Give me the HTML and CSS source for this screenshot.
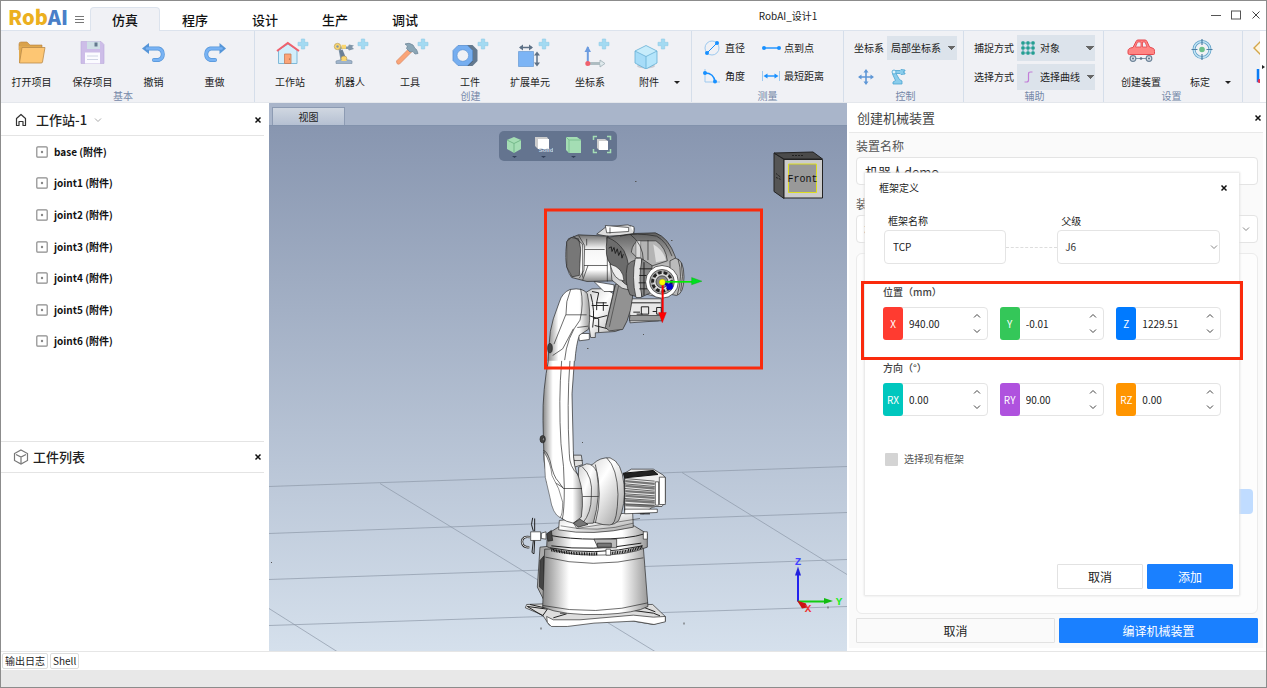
FILE: index.html
```html
<!DOCTYPE html>
<html lang="zh-CN">
<head>
  <meta charset="utf-8">
  <title>RobAI_设计1</title>
  <link rel="stylesheet" href="styles.css">
</head>
<body>
<svg class="defs" aria-hidden="true">
  <symbol id="plus" viewBox="0 0 12 12"><path d="M4.300 1h3.400v3.300H11v3.400H7.700V11H4.300V7.700H1V4.300h3.300z" fill="#a3daf2" stroke="#8fcbe6" stroke-width=".6"/></symbol>
  <symbol id="down" viewBox="0 0 8 8"><path d="M1 2.500l3 3 3-3" fill="none" stroke="currentColor"/></symbol>
  <symbol id="up" viewBox="0 0 8 8"><path d="M1 5.500l3-3 3 3" fill="none" stroke="currentColor"/></symbol>
  <symbol id="close" viewBox="0 0 8 8"><path d="M1.500 1.500l5 5m0-5l-5 5" fill="none" stroke="currentColor" stroke-width="1.500"/></symbol>
  <symbol id="node" viewBox="0 0 12 12"><rect x=".8" y=".8" width="10.400" height="10.400" rx="1" fill="#fff" stroke="#8c8c8c" stroke-width="1.200"/><circle cx="6" cy="6" r="1.200" fill="#888"/></symbol>
</svg>

<header class="titlebar">
  <div class="logo">Rob<span>AI</span></div>
  <button class="menu" type="button" aria-label="菜单"><svg width="9" height="9"><path d="M0 1.500h9M0 4.500h9M0 7.500h9" stroke="#777"/></svg></button>
  <nav class="tabs">
    <a href="#" class="active">仿真</a>
    <a href="#">程序</a>
    <a href="#">设计</a>
    <a href="#">生产</a>
    <a href="#">调试</a>
  </nav>
  <div class="title">RobAI_设计1</div>
  <div class="window-buttons">
    <button type="button" aria-label="最小化"><svg width="12" height="12"><path d="M1 6.500h10" stroke="#555"/></svg></button>
    <button type="button" aria-label="最大化"><svg width="12" height="12"><rect x="1.500" y="2" width="9" height="8" fill="none" stroke="#555"/></svg></button>
    <button type="button" aria-label="关闭"><svg width="12" height="12"><path d="M2.500 2.500l7 7m0-7l-7 7" stroke="#444"/></svg></button>
  </div>
</header>

<div class="ribbon">
  <section class="group basic">
    <div class="tools">
      <button class="tool" type="button">
        <svg width="40" height="32"><path d="M7 7q0-2 2-2h6l3 3h12v5H7z" fill="#d9a24c" stroke="#b98540" stroke-width=".6"/><path d="M7 9h22v17H7z" fill="#e0a94f"/><path d="M10 10.500h23l-2.500 14.500q0 1-1.500 1H7.500z" fill="#fdc673" stroke="#b98a4a" stroke-width=".8"/></svg>
        打开项目</button>
      <button class="tool" type="button">
        <svg width="40" height="32"><path d="M8 4.500h20l3 3v19H8z" fill="#cdbde8" stroke="#bba9da" stroke-width=".6"/><path d="M14 4.500h13v7.500H14z" fill="#cfdfe6"/><path d="M21.500 5.500h3v4h-3z" fill="#63798e"/><path d="M12 15.500h15v11H12z" fill="#fbfbff"/><path d="M14 19h11M14 22.500h11" stroke="#cfd4e5"/></svg>
        保存项目</button>
      <button class="tool" type="button">
        <svg width="40" height="32"><path d="M14 11.500h10.500a6 6 0 0 1 0 11.500H20" fill="none" stroke="#5595d8" stroke-width="4" stroke-linecap="round"/><path d="M8 11.500l7-5.500v11z" fill="#5595d8"/><path d="M13 11.500h11.500a6 6 0 0 1 0 11.500H20" fill="none" stroke="#78b3f4" stroke-width="2.600" stroke-linecap="round"/></svg>
        撤销</button>
      <button class="tool" type="button">
        <svg width="40" height="32"><path d="M26 11.500H15.500a6 6 0 0 0 0 11.500H20" fill="none" stroke="#5595d8" stroke-width="4" stroke-linecap="round"/><path d="M31 11.500L24.500 6v11z" fill="#5595d8"/><path d="M26.500 11.500H15.500a6 6 0 0 0 0 11.500H20" fill="none" stroke="#78b3f4" stroke-width="2.600" stroke-linecap="round"/></svg>
        重做</button>
    </div>
    <h2>基本</h2>
  </section>

  <section class="group create">
    <div class="tools">
      <button class="tool" type="button">
        <svg width="40" height="32"><path d="M8.500 13L18 7l9 6v13.500H8.500z" fill="#d2eefb" stroke="#7fb9d8"/><path d="M7 14L17.800 6 29 14" fill="none" stroke="#f0616d" stroke-width="2"/><path d="M14.500 17h6.500v9.500h-6.500z" fill="#fba477" stroke="#c87b57" stroke-width=".8"/><circle cx="19.500" cy="22" r=".6" fill="#8c5438"/><use href="#plus" x="27" y="1" width="12" height="12"/></svg>
        工作站</button>
      <button class="tool" type="button">
        <svg width="40" height="32"><path d="M8 9.500h10l1-2 5 1-2 1.500 2 2-5 1.500-1-1.500H11l3.500 10-4 1z" fill="#8196a9"/><circle cx="7.500" cy="9.500" r="3.200" fill="#fbd66f" stroke="#b9a060" stroke-width=".7"/><circle cx="7.500" cy="9.500" r="1.200" fill="#8196a9"/><path d="M11.500 7.800H16v4h-4.500z" fill="#fbd66f"/><path d="M9.500 14l3-1.500 3.500 8.500-4.500 1z" fill="#6a7f95"/><circle cx="14" cy="22" r="3" fill="#fbd66f" stroke="#b9a060" stroke-width=".7"/><path d="M6 26.500h16v-2.500l-3-1h-9l-4 1z" fill="#9fb4cc" stroke="#8196a9" stroke-width=".7"/><path d="M11 24l3-4 3 4z" fill="#fbd66f"/><use href="#plus" x="27" y="1" width="12" height="12"/></svg>
        机器人</button>
      <button class="tool" type="button">
        <svg width="40" height="32"><path d="M6.500 24l12-12 3 3-12 12q-1.500.5-2.500-.5z" fill="#fba477" stroke="#d98e6a" stroke-width=".8"/><path d="M15 7q4-2 8 1l2 3.500 1.500 1 1.500 4-3 .5-2-2.500-3 .5-3.500-3.500 1-2.500z" fill="#8ba6b6" stroke="#71899a" stroke-width=".8"/><use href="#plus" x="27" y="1" width="12" height="12"/></svg>
        工具</button>
      <button class="tool" type="button">
        <svg width="40" height="32"><path d="M17 8h5.500l5 5v11l-5 5H17l-4-11z" fill="#64798f"/><path d="M17.500 9l5 5v10l-5 5" fill="none" stroke="#435a72"/><path d="M8 8.500h9.500l5 5v10l-5 5H8l-5-5v-10z" fill="#76aef0" stroke="#5a90cf" stroke-width=".8"/><circle cx="12.800" cy="18.500" r="5.800" fill="#f0f1f5" stroke="#5a90cf" stroke-width=".6"/><use href="#plus" x="27" y="1" width="12" height="12"/></svg>
        工件</button>
      <button class="tool" type="button">
        <svg width="40" height="32"><path d="M8.500 14.500h15v15h-15z" fill="#7cb4f5" stroke="#5a90cf" stroke-width=".6"/><path d="M10 10.500h12M27 16v12" stroke="#5e7186" stroke-width="1.500"/><path d="M9 10.500l4-3v6zM23 10.500l-4-3v6zM27 14.500l-3 4h6zM27 29.500l-3-4h6z" fill="#5e7186"/><use href="#plus" x="28" y="1" width="12" height="12"/></svg>
        扩展单元</button>
      <button class="tool" type="button">
        <svg width="40" height="32"><path d="M17 26.500h13M30 23l5 3.500-5 3.500v-2.500H18v-2h12z" fill="#dfe9ec" stroke="#9fb0b6" stroke-width=".8"/><path d="M17.800 10v15" stroke="#6c9ce0" stroke-width="2"/><path d="M14.500 15l3.300-6 3.200 6z" fill="#6c9ce0"/><circle cx="17.800" cy="26.500" r="2.500" fill="#f0616d"/><use href="#plus" x="28" y="1" width="12" height="12"/></svg>
        坐标系</button>
      <button class="tool wide" type="button">
        <svg width="40" height="32"><ellipse cx="17" cy="29" rx="9" ry="2.500" fill="#c9cdd5"/><path d="M17 8.500l11 5.500-11 5.500L6 14z" fill="#c7ecfb"/><path d="M6 14l11 5.500V32L6 26z" fill="#a6dcf8"/><path d="M28 14l-11 5.500V32l11-6z" fill="#b5e5fb"/><path d="M17 8.500L28 14v12l-11 6-11-6V14zM6 14l11 5.500L28 14M17 19.500V32" fill="none" stroke="#65aed4" stroke-width=".8"/><use href="#plus" x="28" y="1" width="12" height="12"/></svg>
        附件</button>
      <button class="more" type="button" aria-label="更多附件"></button>
    </div>
    <h2>创建</h2>
  </section>

  <section class="group measure">
    <div class="tools">
      <button class="small" type="button"><svg width="20" height="18"><circle cx="10" cy="9" r="7" fill="none" stroke="#9dc9ef"/><path d="M5 14L15 4" stroke="#1890ff"/><circle cx="5" cy="14" r="2" fill="#1890ff"/><circle cx="15" cy="4" r="2" fill="#1890ff"/></svg>直径</button>
      <button class="small" type="button"><svg width="20" height="18"><path d="M3 9h15" stroke="#1890ff" stroke-width="1.400"/><circle cx="3" cy="9" r="2" fill="#1890ff"/><circle cx="18" cy="9" r="2" fill="#1890ff"/></svg>点到点</button>
      <button class="small" type="button"><svg width="20" height="18"><path d="M3 2v13h15" fill="none" stroke="#9dc9ef"/><path d="M3 6q9 0 10 9" fill="none" stroke="#1890ff" stroke-width="1.400"/><circle cx="3" cy="6" r="2" fill="#1890ff"/><circle cx="13" cy="14.500" r="2" fill="#1890ff"/></svg>角度</button>
      <button class="small" type="button"><svg width="20" height="18"><path d="M1.500 4v10M18.500 4v10" stroke="#9dc9ef"/><path d="M4 9h12" stroke="#1890ff" stroke-width="1.400"/><path d="M2.500 9l4-2.500v5zM17.500 9l-4-2.500v5z" fill="#1890ff"/></svg>最短距离</button>
    </div>
    <h2>测量</h2>
  </section>

  <section class="group control">
    <div class="rows">
      <div class="row">
        <label for="coord">坐标系</label>
        <select id="coord" class="drop"><option>局部坐标系</option></select>
      </div>
      <div class="row icons">
        <button type="button" aria-label="移动"><svg width="18" height="18"><path d="M9 2.500v13M2.500 9h13" stroke="#5f97d6" stroke-width="1.600"/><path d="M9 1l2.500 3.500h-5zM9 17l2.500-3.500h-5zM1 9l3.500-2.500v5zM17 9l-3.500-2.500v5z" fill="#5f97d6"/></svg></button>
        <button type="button" aria-label="机器人控制"><svg width="18" height="18"><path d="M4 2.500h7l1-1 4 .5v1l-2 1 2 1v1l-4 .5-1-1H7l3.500 6 2.500 1.500v3H4v-2l2.500-1.500L3.500 6z" fill="#8acdec" stroke="#4ba4d2" stroke-width=".8"/><circle cx="5" cy="4" r="2" fill="#dff2fb" stroke="#4ba4d2" stroke-width=".8"/></svg></button>
      </div>
    </div>
    <h2>控制</h2>
  </section>

  <section class="group assist">
    <div class="rows">
      <div class="row">
        <label for="snap">捕捉方式</label>
        <div class="drop-icon">
          <svg width="16" height="14"><path d="M3 0v14M8 0v14M13 0v14M1 2h14M1 7h14M1 12h14" stroke="#3f9fb3"/><path d="M1.500.5h3v3h-3zM6.500.5h3v3h-3zM11.500.5h3v3h-3zM1.500 5.500h3v3h-3zM6.500 5.500h3v3h-3zM11.500 5.500h3v3h-3zM1.500 10.500h3v3h-3zM6.500 10.500h3v3h-3zM11.500 10.500h3v3h-3z" fill="#25a08f"/></svg>
          <select id="snap" class="drop"><option>对象</option></select>
        </div>
      </div>
      <div class="row">
        <label for="pick">选择方式</label>
        <div class="drop-icon">
          <svg width="16" height="14"><path d="M4.500 12h2q2 0 2-2V4q0-2 2-2h2" fill="none" stroke="#c27ed8" stroke-width="1.200"/></svg>
          <select id="pick" class="drop"><option>选择曲线</option></select>
        </div>
      </div>
    </div>
    <h2>辅助</h2>
  </section>

  <section class="group setup">
    <div class="tools">
      <button class="tool" type="button">
        <svg width="40" height="32"><path d="M7 14q0-3 5-3.500L15 4.500q.5-1.500 2-1.500h7q1.500 0 2 1.500l2.500 5.500 4 1.500q1 .5 1 3v2q0 1-1 1h-24q-1.500 0-1.500-1.500z" fill="#ff8583" stroke="#e5484f"/><path d="M14.500 10l2-5H20v5zM21.500 10V5H24l2 5z" fill="#eef0f6" stroke="#e5484f" stroke-width=".8"/><path d="M12 21.500h15" stroke="#7e96ab"/><circle cx="12" cy="21.500" r="2.800" fill="#dde4ec" stroke="#6d8398" stroke-width="1.200"/><circle cx="28" cy="21.500" r="2.800" fill="#dde4ec" stroke="#6d8398" stroke-width="1.200"/><circle cx="12" cy="21.500" r="1" fill="#5e7186"/><circle cx="28" cy="21.500" r="1" fill="#5e7186"/><circle cx="20" cy="21.500" r="1.300" fill="#5e7186"/></svg>
        创建装置</button>
      <button class="tool wide" type="button">
        <svg width="40" height="32"><circle cx="22" cy="12.500" r="8" fill="none" stroke="#5d9fc6" stroke-width="3"/><circle cx="22" cy="12.500" r="8" fill="none" stroke="#c3e4f5" stroke-width="1.500"/><path d="M22 2v6M22 17v6M11.500 12.500h6M26.500 12.500h6" stroke="#4d7fa3" stroke-width="1.200"/><circle cx="22" cy="12.500" r="2.800" fill="#6cc08b"/></svg>
        标定</button>
      <button class="more" type="button" aria-label="更多标定"></button>
    </div>
    <h2>设置</h2>
  </section>

  <section class="group cut">
    <svg width="30" height="60"><path d="M17 11l-6 6 6 6 6-6z" fill="#fff6df" stroke="#d3a64a" stroke-width="1.400"/><path d="M15 38v12h12" fill="none" stroke="#0a7cf5" stroke-width="2.500"/><circle cx="16.500" cy="50" r="2" fill="#e8304c"/></svg>
  </section>
  <button class="scroll" type="button" aria-label="向右滚动"><svg width="3" height="4"><path d="M0 0l3 2-3 2z" fill="#222"/></svg></button>
</div>

<main class="workspace">
  <aside class="sidebar">
    <section class="panel stations">
      <header>
        <svg width="14" height="14" class="house"><path d="M2.500 12.500V5.500L7 1.500l4.500 4v7h-2.500V8.500H5v4z" fill="none" stroke="#333" stroke-width="1.200" stroke-linejoin="round"/></svg>
        <h3>工作站-1</h3>
        <svg width="8" height="8" class="fold"><use href="#down"/></svg>
        <button class="close" type="button" aria-label="关闭"><svg width="8" height="8"><use href="#close"/></svg></button>
      </header>
      <ul>
        <li><svg width="12" height="12"><use href="#node"/></svg>base (附件)</li>
        <li><svg width="12" height="12"><use href="#node"/></svg>joint1 (附件)</li>
        <li><svg width="12" height="12"><use href="#node"/></svg>joint2 (附件)</li>
        <li><svg width="12" height="12"><use href="#node"/></svg>joint3 (附件)</li>
        <li><svg width="12" height="12"><use href="#node"/></svg>joint4 (附件)</li>
        <li><svg width="12" height="12"><use href="#node"/></svg>joint5 (附件)</li>
        <li><svg width="12" height="12"><use href="#node"/></svg>joint6 (附件)</li>
      </ul>
    </section>
    <section class="panel parts">
      <header>
        <svg width="16" height="16"><path d="M8 1l6.500 3.500v7L8 15l-6.500-3.500v-7zM3 5.500L8 8l5-2.500M8 8v6" fill="none" stroke="#777" stroke-width="1.200"/></svg>
        <h3>工件列表</h3>
        <button class="close" type="button" aria-label="关闭"><svg width="8" height="8"><use href="#close"/></svg></button>
      </header>
    </section>
  </aside>

  <section class="view">
    <div class="view-tabs"><button type="button">视图</button></div>
    <div class="canvas">
      <svg class="scene" viewBox="269 125 578 526" preserveAspectRatio="xMidYMid slice">
        <defs>
          <linearGradient id="shell"><stop offset="0" stop-color="#888"/><stop offset=".25" stop-color="#fff"/><stop offset=".75" stop-color="#fff"/><stop offset="1" stop-color="#999"/></linearGradient>
          <linearGradient id="dome" x1="0" y1="0" x2="1" y2="1"><stop offset="0" stop-color="#ccc"/><stop offset=".4" stop-color="#fff"/><stop offset="1" stop-color="#9a9a9a"/></linearGradient>
          <linearGradient id="hood" x1="0" y1="0" x2="0" y2="1"><stop offset="0" stop-color="#606060"/><stop offset=".5" stop-color="#bbb"/><stop offset="1" stop-color="#eee"/></linearGradient>
          <linearGradient id="box" x1="0" y1="0" x2="0" y2="1"><stop offset="0" stop-color="#707070"/><stop offset=".3" stop-color="#f6f6f6"/><stop offset=".75" stop-color="#fff"/><stop offset="1" stop-color="#888"/></linearGradient>
        </defs>

        <!-- floor grid -->
        <path d="M269 486L847 466M269 533L847 512M269 579L847 559M269 625L847 606M380 483L655 651M682 472L847 574M269 608L337 651" fill="none" stroke="#8d98a8" stroke-width=".7"/>
        <path d="M635 181h1.500M587 348h1.500M643 334h1M671 240h1.500M582 442h1M541 627v2M684 622v2M828 606v2M271 562h1" stroke="#555"/>

        <!-- base, turntable and lower arm -->
        <g transform="translate(510 360) scale(.3333)" stroke="#222" stroke-width="2" stroke-linejoin="round">
          <path d="M82 680L90 560l40-4v180l-30-20z" fill="#aaa"/>
          <path d="M90 600l12-14v105l-14-12z" fill="#444"/>
          <path d="M46 742l4-10 58-2 320 2 38 36v14l-36 10-60-10-60-6-170 20-22-2-20-30z" fill="#ddd"/>
          <path d="M110 768l20 10 80 0 160-14 60 6 36-2v16l-34 8-60-10-120 6-80 10-48 0-12-12z" fill="#fff"/>
          <path d="M52 738l60 8-14 20zM150 758l180-4M370 750l60 8 20 8M130 772l40-12M60 732l44 10M400 740l36 14" fill="none" stroke-width="3"/>
          <path d="M104 566L98 740q60 26 180 22 100-4 136-24L400 560z" fill="url(#shell)"/>
          <path d="M98 735q160 34 316-8M106 590q140 36 294 2" fill="none"/>
          <path d="M112 520l40-24h220l40 24v40q-60 26-160 24-100 0-142-26z" fill="url(#shell)"/>
          <path d="M120 562q130 26 278-6M116 524q60 12 140 12 100 0 148-16M124 556q120 18 270-8" fill="none" stroke-width="3"/>
          <path d="M124 568q60 14 140 12M300 578q60-4 98-20" fill="none" stroke="#111" stroke-width="9" stroke-dasharray="3 2"/>
          <path d="M252 536h68v26h-56z" fill="#bbb"/>
          <path d="M262 548h42v12h-42z" fill="#777"/>
          <path d="M288 566h14v18h-14zM400 514h12v22h-12z" fill="#fff"/>
          <path d="M148 480l-2 28q100 20 224-8l-2-44-100 10z" fill="url(#dome)"/>
          <path d="M152 496q110 24 218-8M180 470l20 34 190-30" fill="none" stroke-width="1.500"/>
          <path d="M344 338l20-12h66l30 18 6 8v72l-10 14h-26l-30 22-56-6z" fill="#eee"/>
          <path d="M340 338l90-8 14 12-100 10zM390 460h30" stroke="#111" fill="#222" stroke-width="3"/>
          <path d="M346 362l88 8M346 376l88 8M346 392l88 6M346 406l88 6M346 420l88 6M346 434l88 4" fill="none" stroke="#777" stroke-width="7"/>
          <path d="M344 354l90 8M344 370l90 8M344 384l90 8M344 400l90 6M344 414l90 6M344 430l90 4" fill="none" stroke-width="2"/>
          <path d="M344 446h98v10l-98 4z" fill="#fff"/>
          <path d="M436 364h10v70h-10zM448 350h18v82h-18z" fill="#fff"/>
          <path d="M190 284h24l4 28-24 8zM192 300h26" fill="#ddd"/>
          <path d="M250 310q20-20 50-18 36 12 42 80 6 60-16 108-20 24-70 6l-30-6q-20-90 0-156z" fill="url(#dome)"/>
          <path d="M290 292q32 30 34 110-2 80-18 90M256 312q24 90 0 176M344 340v110" fill="none"/>
          <path d="M206 320l24-10q20 0 30 24 14 70-10 154l-50 2z" fill="url(#dome)"/>
          <path d="M216 318q34 30 28 90 0 50-26 80M218 408h48" fill="none"/>
          <path d="M117-10q-20 100-18 190l3 120q6 45 16 80l12 60q15 40 60 48l24-18q10-70-8-120-16-30-16-80l-4-170 8-110" fill="url(#shell)"/>
          <path d="M155 0q-10 120-2 250 10 70 10 130 0 70-6 96M180 0q-10 130-2 280 0 40 26 62M100 270q10 0 20 30 10 50 26 64l14 20h56M108 364h24l28 18" fill="none"/>
          <path d="M102 275q20 30 24 70 24 40 32 80 0 40-8 46-22-10-30-60l-14-60z" fill="#fff" stroke-width="1.500"/>
          <ellipse cx="98" cy="236" rx="8" ry="11" fill="#444"/>
          <ellipse cx="100" cy="236" rx="3" ry="5" fill="#999"/>
          <path d="M62 514h30v26H62zM94 518l14-4v22l-14-2z" fill="#fff"/>
          <path d="M110 520l14-10 4 30-14 2z" fill="#444"/>
          <path d="M68 472q-8 20 2 40M74 474v38M70 540l-4 36 6 4 2-40" fill="none" stroke-width="3"/>
          <path d="M60 530q-24-4-24 14 2 18 22 16" fill="none" stroke="#222" stroke-width="7"/>
          <path d="M60 530q-24-4-24 14 2 18 22 16" fill="none" stroke="#ddd" stroke-width="3"/>
          <path d="M190 488l20-12 24 16-30 8z" fill="#777"/>
        </g>

        <!-- upper arm, wrist and flange -->
        <g transform="translate(520 205) scale(.3333)" stroke="#222" stroke-width="2" stroke-linejoin="round">
          <path d="M176 392l6-8h26v18l-30 4z" fill="#fff"/>
          <path d="M196 262l20-12h40l50 30v90l-20 8-60 4v14h-14l-6-40z" fill="url(#dome)"/>
          <path d="M216 258l20 4-6 30h30M215 300h50M230 290v24M212 266q14 50 6 100M250 290v26M222 340l40-10M224 360l40 10M206 330l30 10v40" fill="none" stroke-width="3"/>
          <path d="M84 466l4-56q0-30 12-70l18-50q8-28 32-38 40-7 52 13 12 56 4 106l-28 18q-10 30-13 77" fill="url(#shell)"/>
          <path d="M152 252q-16 36-14 74l-36 90M182 250q10 44-2 94-40 50-46 120M138 328h62M172 366l32-4M160 370l-32 60-30 20" fill="none"/>
          <ellipse cx="90" cy="428" rx="7" ry="14" fill="#444"/>
          <path d="M328 280h96v50l-8 16-86 6z" fill="#e8e8e8"/>
          <path d="M332 292h90M340 320h20M350 326h18M364 304h22v22h-22zM398 318h12M410 306h14v20h-14z" fill="none" stroke-width="3"/>
          <path d="M330 330h96v16h-98z" fill="#999"/>
          <path d="M222 228l60 10v20h-30z" fill="#fff"/>
          <path d="M286 236h54q-2 90-32 136l-40 4-12-10z" fill="#929292"/>
          <path d="M296 240l-28 124M286 240l-28 118" fill="none" stroke-width="1.500"/>
          <path d="M230 86l28-22 66-6 18 10-2 20-80 4z" fill="#ddd"/>
          <path d="M256 60l70 6v12l-66 4zM270 66v18M330 60l12 4v18" fill="#fff"/>
          <path d="M145 100l30-12 90 4 26 30v104l-90 2-46-12q-16-20-18-60 0-40 8-56z" fill="url(#box)"/>
          <path d="M140 108l14-12 22 4 6 30-4 80-22 4-16-30z" fill="#777"/>
          <path d="M176 90l18 30-2 74-14 24M160 92l28 24v100M194 132h60M192 180h70M262 92v136M200 100v20M204 180l-16 44" fill="none"/>
          <path d="M260 96l80-12 66-2q40 14 60 72l6 60-60 60-106-26-30-24q-8-80-16-128z" fill="url(#hood)"/>
          <path d="M262 96q-10 60 10 80 30 60 58 66 2-66-18-106-20-30-50-40z" fill="#6c6c6c"/>
          <path d="M270 176q40 10 42 50-30 0-42-50z" fill="#eee"/>
          <path d="M266 128l8-4 2 14 6-12 4 18 6-14 4 20 6-14 4 22 4-12" fill="none" stroke="#222" stroke-width="3"/>
          <path d="M334 140q4-30 24-34h50q30 20 34 60l-60 20z" fill="#b4b4b4"/>
          <path d="M348 106h14v50h-14z" fill="#ddd" stroke-width="1"/>
          <path d="M384 104v60M300 92q50-12 110 0 30 16 46 60M330 86q40 30 40 80" fill="none"/>
          <path d="M400 116q30 18 38 48l-30 6z" fill="#ddd" stroke="none"/>
          <path d="M466 158q26 4 26 56 0 50-22 56l-20-4V166z" fill="#bbb"/>
          <path d="M474 160q16 50-2 108M484 172q8 40-2 84" fill="none"/>
          <path d="M322 180q-10 50 8 88l22 6V164q-20 0-30 16z" fill="#777"/>
          <path d="M346 158h18q10 60 0 118h-16q-14-60-2-118z" fill="#e4e4e4"/>
          <path d="M366 160l30 20v80l-30 14q-12-50 0-114z" fill="#888"/>
          <path d="M358 190h40M358 210h22M356 232h24M358 250h40M372 170v100" fill="none" stroke-width="3"/>
          <circle cx="426" cy="229" r="49" fill="#fff"/>
          <circle cx="426" cy="229" r="37" fill="#aaa"/>
          <circle cx="426" cy="229" r="28" fill="#ddd" stroke="#222" stroke-width="9" stroke-dasharray="11 6"/>
          <circle cx="426" cy="229" r="18" fill="#888"/>
          <path d="M428 229v96" stroke="#f00" stroke-width="6"/>
          <path d="M416 321h23l-12 31z" fill="#f00" stroke="#c00" stroke-width="1"/>
          <path d="M428 229h90" stroke="#0e0" stroke-width="5"/>
          <path d="M515 216l31 11-31 11z" fill="#0d2" stroke="#0a0" stroke-width="1"/>
          <path d="M428 230l14 8" stroke="#00a" stroke-width="8"/>
          <circle cx="449" cy="243" r="10" fill="#00c" stroke="none"/>
          <circle cx="427" cy="230" r="9" fill="#ff0" stroke="#aa0" stroke-width="1"/>
        </g>

        <!-- view cube -->
        <g stroke="#222" stroke-linejoin="round">
          <path d="M774 152.500l10 6.500v39l-10-7z" fill="#555"/>
          <path d="M774 152.500l39-1 9.500 7H784z" fill="#4a4a4a"/>
          <path d="M784 159h38.500v38.500H784z" fill="#ccc"/>
          <path d="M788.500 163.500h28v28.500h-28z" fill="#999" stroke="#dddd20"/>
          <path d="M792 155h12M776 173l5 4m-5 0l5 2" stroke="#222" stroke-dasharray="2 1"/>
        </g>
        <text x="802.500" y="181" class="cube-text">Front</text>

        <!-- world axes -->
        <path d="M798 601v-27" stroke="#22e" stroke-width="2"/>
        <path d="M795 575l3-9 3 9z" fill="#22d"/>
        <path d="M798 601h27" stroke="#1c1" stroke-width="2"/>
        <path d="M824 597.500l9 3-9 3z" fill="#1b1"/>
        <path d="M797 600l9 3 1 4-5 1z" fill="#c11"/>
        <text x="798" y="564" class="axis z">Z</text>
        <text x="839" y="604" class="axis y">Y</text>
        <text x="808" y="611" class="axis x">X</text>

        <rect x="545.500" y="209.500" width="216" height="158" class="mark"/>
      </svg>
      <div class="view-tools">
        <button type="button" aria-label="视角"><svg width="20" height="24"><path d="M10 3l7 3v9l-7 4-7-4V6z" fill="#a4ddb4"/><path d="M3 6l7 3.500L17 6M10 9.500V19" fill="none" stroke="#74b98a"/><path d="M8 22h5l-2.500 2z" fill="#33405a"/></svg></button>
        <button type="button" aria-label="实体"><svg width="20" height="24"><path d="M2 3h12l2 3v9H5l-3-3z" fill="#ccc"/><path d="M5 5h11v10H5z" fill="#fff"/><path d="M8 22h5l-2.500 2z" fill="#33405a"/><text x="13" y="18">Solid</text></svg></button>
        <button type="button" aria-label="面"><svg width="20" height="24"><path d="M3 3h11l4 3v13H6l-3-3z" fill="#a4ddb4"/><path d="M3 3l3 3h12M6 6v13" fill="none" stroke="#7cc091"/><path d="M8 22h5l-2.500 2z" fill="#33405a"/></svg></button>
        <button type="button" aria-label="适应窗口"><svg width="20" height="24"><path d="M1.500 6V2.500H5M15 2.500h3.500V6M18.500 15v3.500H15M5 18.500H1.500V15" fill="none" stroke="#a4ddb4" stroke-width="1.500"/><path d="M5 5h8l3 2v9H7l-2-2z" fill="#ccc"/><path d="M7 7h9v9H7z" fill="#fff"/></svg></button>
      </div>
    </div>
  </section>

  <aside class="device">
    <header>
      <h3>创建机械装置</h3>
      <button class="close" type="button" aria-label="关闭"><svg width="8" height="8"><use href="#close"/></svg></button>
    </header>
    <form class="device-form">
      <label for="device-name">装置名称</label>
      <input id="device-name" type="text" value="机器人demo">
      <label for="device-type">装置类型</label>
      <div class="select-box">
        <select id="device-type"><option>机器人</option></select>
        <svg width="8" height="8"><use href="#down"/></svg>
      </div>
      <div class="frames"><button type="button" aria-label="编辑框架"></button></div>
      <div class="actions">
        <button type="button">取消</button>
        <button type="button" class="primary">编译机械装置</button>
      </div>
    </form>

    <form class="dialog">
      <header>
        <h4>框架定义</h4>
        <button class="close" type="button" aria-label="关闭"><svg width="8" height="8"><use href="#close"/></svg></button>
      </header>
      <div class="frame-row">
        <div class="field name">
          <label for="frame-name">框架名称</label>
          <input id="frame-name" type="text" value="TCP">
        </div>
        <i class="link"></i>
        <div class="field parent">
          <label for="frame-parent">父级</label>
          <div class="select-box">
            <select id="frame-parent"><option>J6</option></select>
            <svg width="8" height="8"><use href="#down"/></svg>
          </div>
        </div>
      </div>
      <fieldset class="marked">
        <legend>位置（mm）</legend>
        <div class="spins">
          <div class="spin"><label for="px" class="red">X</label><input id="px" type="text" value="940.00"><span><button type="button" aria-label="增加 X"><svg width="8" height="8"><use href="#up"/></svg></button><button type="button" aria-label="减少 X"><svg width="8" height="8"><use href="#down"/></svg></button></span></div>
          <div class="spin"><label for="py" class="green">Y</label><input id="py" type="text" value="-0.01"><span><button type="button" aria-label="增加 Y"><svg width="8" height="8"><use href="#up"/></svg></button><button type="button" aria-label="减少 Y"><svg width="8" height="8"><use href="#down"/></svg></button></span></div>
          <div class="spin"><label for="pz" class="blue">Z</label><input id="pz" type="text" value="1229.51"><span><button type="button" aria-label="增加 Z"><svg width="8" height="8"><use href="#up"/></svg></button><button type="button" aria-label="减少 Z"><svg width="8" height="8"><use href="#down"/></svg></button></span></div>
        </div>
      </fieldset>
      <fieldset>
        <legend>方向（°）</legend>
        <div class="spins">
          <div class="spin"><label for="rx" class="teal">RX</label><input id="rx" type="text" value="0.00"><span><button type="button" aria-label="增加 RX"><svg width="8" height="8"><use href="#up"/></svg></button><button type="button" aria-label="减少 RX"><svg width="8" height="8"><use href="#down"/></svg></button></span></div>
          <div class="spin"><label for="ry" class="purple">RY</label><input id="ry" type="text" value="90.00"><span><button type="button" aria-label="增加 RY"><svg width="8" height="8"><use href="#up"/></svg></button><button type="button" aria-label="减少 RY"><svg width="8" height="8"><use href="#down"/></svg></button></span></div>
          <div class="spin"><label for="rz" class="orange">RZ</label><input id="rz" type="text" value="0.00"><span><button type="button" aria-label="增加 RZ"><svg width="8" height="8"><use href="#up"/></svg></button><button type="button" aria-label="减少 RZ"><svg width="8" height="8"><use href="#down"/></svg></button></span></div>
        </div>
      </fieldset>
      <div class="existing">
        <input id="existing" type="checkbox">
        <label for="existing">选择现有框架</label>
      </div>
      <footer>
        <button type="button">取消</button>
        <button type="button" class="primary">添加</button>
      </footer>
    </form>
  </aside>
</main>

<nav class="output">
  <button type="button">输出日志</button>
  <button type="button">Shell</button>
</nav>
<footer class="status"></footer>
</body>
</html>
```

FILE: styles.css
```css
* {
  box-sizing: border-box;
}
body {
  margin: 0;
  height: 100vh;
  display: flex;
  flex-direction: column;
  border: 1px solid #8c8c8c;
  background: #fff;
  font-family: "Noto Sans CJK SC", sans-serif;
  font-size: 10px;
  line-height: 16px;
  color: #222;
  overflow: hidden;
}
button, input, select {
  font: inherit;
  color: inherit;
  margin: 0;
  padding: 0;
  border: none;
  background: none;
}
select {
  appearance: none;
}
h2, h3, h4, ul, fieldset, legend {
  margin: 0;
  padding: 0;
  border: none;
  font-weight: normal;
}
a {
  color: inherit;
  text-decoration: none;
}
svg {
  display: block;
  flex: none;
}
.defs {
  position: absolute;
  width: 0;
  height: 0;
}

/* title bar */
.titlebar {
  display: flex;
  height: 30px;
  flex: none;
  border-bottom: 1px solid #dce3ed;
}
.logo {
  width: 74px;
  padding-left: 7px;
  font-size: 20px;
  line-height: 31px;
  font-weight: 900;
  color: #ecb01f;
}
.logo span {
  color: #4a7fc8;
}
.menu {
  width: 15px;
  padding-top: 7px;
}
.tabs {
  display: flex;
  padding-top: 6px;
}
.tabs a {
  width: 70px;
  height: 24px;
  line-height: 26px;
  font-size: 13px;
  font-weight: 500;
  color: #111;
  text-align: center;
}
.tabs .active {
  background: #f0f1f5;
  border: 1px solid #dce3ed;
  border-bottom: none;
  border-radius: 4px 4px 0 0;
  line-height: 24px;
}
.title {
  flex: 1;
  text-align: center;
  line-height: 30px;
}
.window-buttons {
  display: flex;
  gap: 8px;
  align-items: center;
  width: 130px;
  justify-content: flex-end;
  padding: 0 4px 2px 0;
}

/* ribbon */
.ribbon {
  display: flex;
  flex: none;
  height: 72px;
  background: #f0f1f5;
  border-bottom: 1px solid #e4e7ec;
}
.group {
  flex: none;
  display: flex;
  flex-direction: column;
  border-right: 1px solid #d5deea;
}
.group h2 {
  font-size: 10px;
  line-height: 12px;
  text-align: center;
  color: #7588a8;
}
.tools {
  display: flex;
  height: 60px;
}
.tool {
  width: 60px;
  padding-top: 6px;
  display: flex;
  flex-direction: column;
  align-items: center;
  gap: 5px;
  white-space: nowrap;
}
.tool.wide {
  width: 58px;
}
.basic {
  padding-right: 9px;
}
.basic .tool {
  width: 61px;
}
.create {
  padding: 0 10px 0 5px;
}
.more {
  width: 8px;
  height: 16px;
  margin-left: -5px;
  align-self: flex-end;
}
.more::after {
  content: "";
  display: block;
  margin: 0 auto;
  width: 0;
  border: 3px solid transparent;
  border-top-color: #222;
  border-bottom: none;
}
.measure {
  padding: 0 10px;
}
.measure .tools {
  display: grid;
  grid-template-columns: 59px 72px;
  padding-top: 3px;
}
.small {
  display: flex;
  align-items: center;
  gap: 3px;
  white-space: nowrap;
}
.rows {
  height: 60px;
  display: flex;
  flex-direction: column;
  justify-content: flex-end;
  gap: 3px;
}
.row {
  display: flex;
  align-items: center;
  gap: 3px;
  height: 26px;
}
.icons {
  gap: 14px;
  padding-left: 3px;
}
.control {
  width: 120px;
  padding: 0 6px 0 10px;
}
.drop {
  flex: 1;
  height: 24px;
  padding: 0 4px;
  border-radius: 0;
  background: linear-gradient(to top right, transparent 50%, #666 50%) right 5px center / 4px 4px no-repeat,
    linear-gradient(to top left, transparent 50%, #666 50%) right 1px center / 4px 4px no-repeat, #dce3eb;
}
.assist {
  width: 140px;
  padding: 0 8px 0 10px;
}
.drop-icon {
  flex: 1;
  display: flex;
  align-items: center;
  gap: 3px;
  padding-left: 3px;
  background: #dce3eb;
}
.drop-icon .drop {
  height: 26px;
  padding: 0 1px;
}
.setup {
  padding: 0 10px 0 7px;
}
.cut {
  flex: 1;
  min-width: 0;
  overflow: hidden;
  border-right: none;
}
.scroll {
  width: 6px;
  padding-left: 2px;
  background: #fff;
}

/* workspace */
.workspace {
  flex: 1;
  min-height: 0;
  display: flex;
}
.sidebar {
  width: 268px;
  flex: none;
  padding-right: 5px;
  display: flex;
  flex-direction: column;
}
.panel header {
  display: flex;
  align-items: center;
  height: 31px;
  padding: 0 2px 0 12px;
  border-bottom: 1px solid #e4e4e4;
}
.panel h3 {
  font-size: 13px;
  line-height: 20px;
  font-weight: 500;
  margin-left: 4px;
}
.stations {
  flex: 1;
}
.panel.stations header {
  height: 33px;
  padding-top: 1px;
}
.panel.stations h3 {
  margin-left: 8px;
}
.house {
  margin-left: 1px;
}
.fold {
  margin-left: 7px;
  color: #aaa;
}
.close {
  margin-left: auto;
  color: #111;
}
.parts {
  height: 210px;
  border-top: 1px solid #e4e4e4;
}
.panel ul {
  display: flex;
  flex-direction: column;
  height: 221px;
  list-style: none;
  padding: 0 0 0 35px;
}
.panel li {
  flex: 1;
  display: flex;
  align-items: center;
  gap: 6px;
  font-weight: bold;
  color: #111;
}
.view {
  flex: 1;
  min-width: 0;
  display: flex;
  flex-direction: column;
}
.view-tabs {
  height: 22px;
  flex: none;
  padding: 4px 3px 0;
  background: #a9b5ca;
}
.view-tabs button {
  width: 73px;
  height: 18px;
  line-height: 16px;
  border: 1px solid #8d9bb3;
  border-bottom: none;
  background: linear-gradient(#d0d7e1, #b5c0d2);
  display: block;
}
.canvas {
  position: relative;
  flex: 1;
  min-height: 0;
  border-top: 1px solid #8292ac;
  background: linear-gradient(#8896b0, #d5e0ec);
}
.scene {
  width: 100%;
  height: 100%;
}
.scene text {
  text-anchor: middle;
  font-family: "Liberation Mono", monospace;
}
.cube-text {
  font-size: 10px;
  fill: #111;
}
.axis {
  font-size: 11px;
  font-weight: bold;
}
.z { fill: #44f; }
.y { fill: #2e2; }
.x { fill: #e33; }
.mark {
  fill: none;
  stroke: #fa2a0c;
  stroke-width: 3px;
}
.view-tools {
  position: absolute;
  top: 5px;
  left: 0;
  right: 0;
  width: 118px;
  height: 30px;
  margin: 0 auto;
  padding: 2px 0;
  display: flex;
  justify-content: space-around;
  border-radius: 5px;
  background: #64748f;
}
.view-tools text {
  text-anchor: middle;
  font: bold 6px "Liberation Sans", sans-serif;
  fill: #c9d6e2;
}

/* device panel */
.device {
  position: relative;
  width: 419px;
  flex: none;
  padding: 0 3px 0 2px;
  display: flex;
  flex-direction: column;
}
.device > header {
  display: flex;
  align-items: center;
  height: 30px;
  padding: 0 1px 0 8px;
  border-bottom: 1px solid #e9e9e9;
}
.device h3 {
  font-size: 13px;
  line-height: 20px;
  color: #444;
}
.device-form {
  flex: 1;
  display: flex;
  flex-direction: column;
  padding: 4px 5px 5px 7px;
  margin-bottom: 3px;
  background: #fafafa;
}
.device-form > label {
  font-size: 12px;
  line-height: 18px;
  color: #555;
}
.device input, .select-box {
  border: 1px solid #e4e4e4;
  border-radius: 4px;
  background: #fff;
}
.device-form > input, .device-form > .select-box {
  height: 28px;
  margin: 2px 0 10px;
  padding: 0 8px;
  font-size: 13px;
}
.select-box {
  display: flex;
  align-items: center;
  padding: 0 1px 0 7px;
  color: #888;
}
.select-box select {
  flex: 1;
  height: 100%;
  color: #333;
}
.device-form > .select-box {
  padding: 0 7px;
}
.frames {
  flex: 1;
  display: flex;
  justify-content: flex-end;
  align-items: flex-end;
  padding: 0 4px 99px;
  border: 1px solid #ebebeb;
  border-radius: 6px;
  background: #fdfdfd;
}
.frames button {
  width: 60px;
  height: 25px;
  border-radius: 4px;
  background: #c0dcff;
}
.actions {
  display: flex;
  gap: 4px;
  margin-top: 4px;
}
.actions button, .dialog footer button {
  flex: 1;
  height: 25px;
  border: 1px solid #e2e2e2;
  border-radius: 1px;
  font-size: 12px;
}
.device .primary {
  border-color: #1a80ff;
  background: #1a80ff;
  color: #fff;
}

/* frame dialog */
.dialog {
  position: absolute;
  top: 70px;
  left: 18px;
  right: 27px;
  padding: 0 6px 6px;
  background: #fff;
  box-shadow: 0 0 2px 1px #e2e2e2;
}
.dialog > header {
  display: flex;
  align-items: center;
  height: 30px;
  padding: 0 5px 0 8px;
}
.frame-row {
  display: flex;
  align-items: flex-end;
  padding: 10px 13px 0;
}
.field label {
  display: block;
  padding-left: 4px;
  margin-bottom: 1px;
}
.field input, .field .select-box {
  width: 100%;
  height: 34px;
}
.field input {
  padding: 0 8px 1px;
}
.name {
  flex: 3;
}
.parent {
  flex: 4;
}
.link {
  width: 51px;
  margin-bottom: 16px;
  border-top: 1px dashed #ddd;
}
.dialog fieldset {
  min-width: 0;
  margin: 0 6px;
  padding: 0 6px;
  height: 76px;
}
.dialog .marked {
  margin: 17px -10px 0;
  padding: 0 19px;
  height: 79px;
  border: 3px solid #fa2a0c;
}
.dialog legend {
  float: left;
  width: 100%;
  color: #444;
  font-weight: 500;
}
.spins {
  display: flex;
  gap: 12px;
  padding-top: 7px;
  clear: both;
}
.spin {
  flex: 1;
  min-width: 0;
  display: flex;
  height: 33px;
  border: 1px solid #e4e4e4;
  border-radius: 4px;
}
.spin label {
  width: 20px;
  margin: -1px 0 -1px -1px;
  flex: none;
  border-radius: 3px;
  line-height: 33px;
  text-align: center;
  color: #fff;
}
.dialog .spin input {
  flex: 1;
  min-width: 0;
  padding-left: 6px;
  border: none;
}
.spin span {
  width: 20px;
  display: flex;
  flex-direction: column;
  justify-content: space-between;
  align-items: center;
  padding: 4px 0;
  color: #444;
}
.red { background: #ff3b30; }
.green { background: #34c759; }
.blue { background: #007aff; }
.teal { background: #00c7be; }
.purple { background: #af52de; }
.orange { background: #ff9500; }
.existing {
  display: flex;
  align-items: center;
  gap: 6px;
  height: 16px;
  padding-left: 14px;
  margin-top: 15px;
  color: #555;
}
.existing input {
  appearance: none;
  width: 13px;
  height: 13px;
  border: none;
  border-radius: 1px;
  background: #d4d4d4;
}
.dialog footer {
  display: flex;
  gap: 4px;
  width: 176px;
  margin: 97px 0 0 auto;
}

/* bottom */
.output {
  display: flex;
  flex: none;
  gap: 2px;
  height: 19px;
  padding: 1px;
  border-top: 1px solid #e6e6e6;
}
.output button {
  padding: 0 2px;
  border: 1px solid #ddd;
  border-radius: 2px;
  line-height: 14px;
}
.status {
  flex: none;
  height: 17px;
  background: #e8e8e8;
}
```
